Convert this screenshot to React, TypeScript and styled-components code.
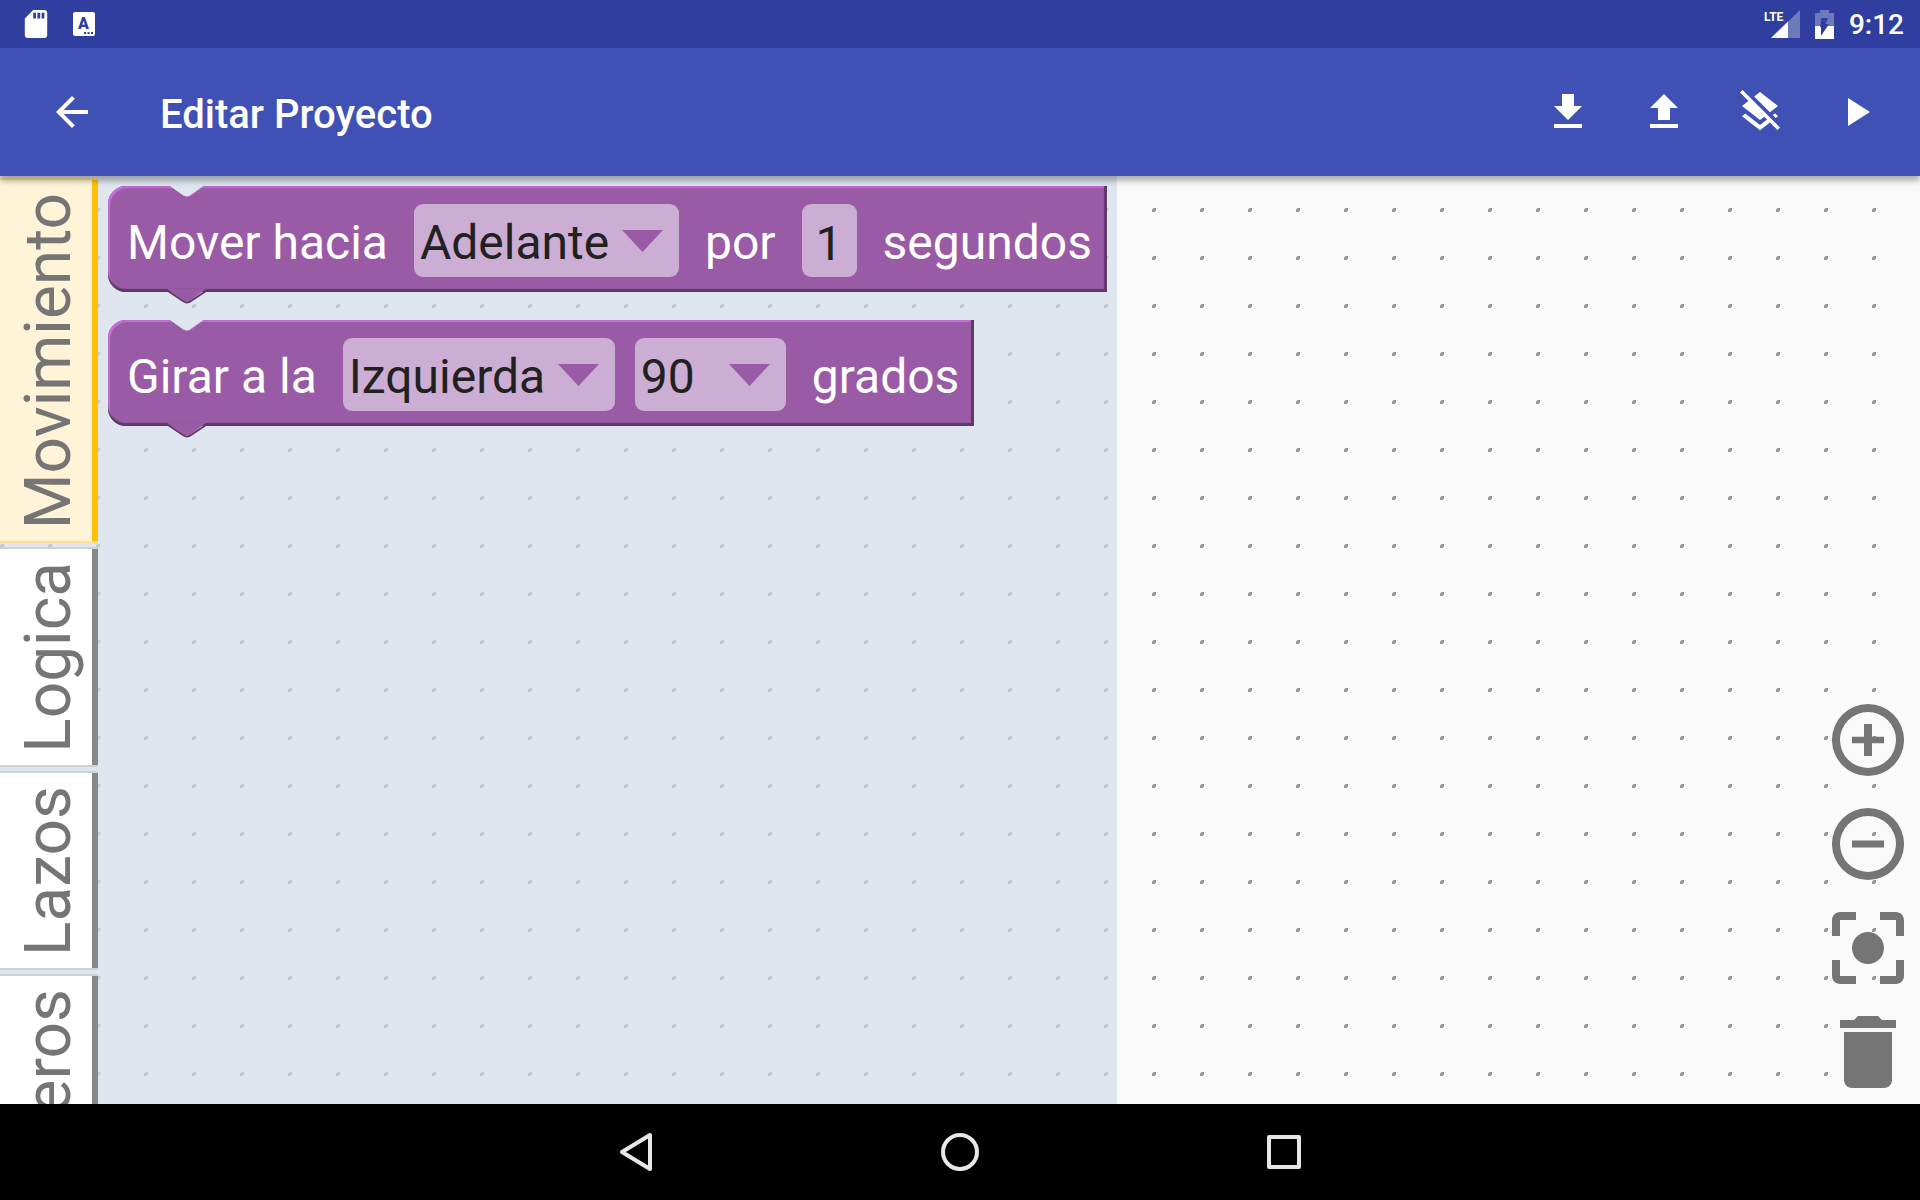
import React from "react";
import styled, { createGlobalStyle } from "styled-components";

const Global = createGlobalStyle`
  *, *::before, *::after { box-sizing: border-box; }
  body { margin: 0; background: #000; font-family: Roboto, "Noto Sans", sans-serif; }
  button { border: 0; padding: 0; background: none; color: inherit; font: inherit; cursor: pointer; }
`;

const Screen = styled.div`
  display: flex;
  flex-direction: column;
  height: 100vh;
  overflow: hidden;
`;

const StatusBar = styled.div`
  flex: none;
  height: 48px;
  padding: 0 16px 0 24px;
  display: flex;
  align-items: center;
  justify-content: space-between;
  background: #303f9f;
  color: #fff;
`;

const StatusGroup = styled.div<{ $gap: number }>`
  display: flex;
  align-items: center;
  gap: ${(p) => p.$gap}px;
`;

const Clock = styled.time`
  padding-top: 2px;
  font-size: 28px;
  line-height: 32px;
  font-weight: 500;
`;

const AppBar = styled.header`
  position: relative;
  z-index: 2;
  flex: none;
  height: 128px;
  padding: 0 16px 0 24px;
  display: flex;
  align-items: center;
  background: #3f51b5;
  color: #fff;
  box-shadow: 0 5px 6px rgba(0, 0, 0, 0.3);
`;

const IconButton = styled.button`
  width: 96px;
  height: 96px;
  display: grid;
  place-items: center;
`;

const Title = styled.h1`
  flex: 1;
  margin: 0;
  padding: 6px 0 0 40px;
  font-size: 40px;
  line-height: 48px;
  font-weight: 500;
`;

const Workspace = styled.main`
  position: relative;
  flex: 1;
  min-height: 0;
  display: flex;
  justify-content: space-between;
  background: #fafafa;
`;

const Grid = styled.svg`
  position: absolute;
  inset: 0;
  width: 100%;
  height: 100%;
`;

const Toolbox = styled.div`
  position: relative;
  display: flex;
  overflow: hidden;
  background: rgba(211, 221, 233, 0.7);
`;

const Tabs = styled.nav`
  display: flex;
  flex-direction: column;
  gap: 4px;
  padding-top: 2px;
`;

const Tab = styled.button<{ $active?: boolean }>`
  flex: none;
  width: 98px;
  padding: 13px 0 12px;
  display: flex;
  justify-content: center;
  border: solid ${(p) => (p.$active ? "#ffdf90" : "#d0d2d4")};
  border-width: 2px 0;
  background: ${(p) => (p.$active ? "#fff4d7" : "#fff")};
  box-shadow: inset -6px 0 ${(p) => (p.$active ? "#ffc107" : "#888")};
`;

const TabLabel = styled.span`
  writing-mode: vertical-rl;
  transform: rotate(180deg);
  font-size: 64px;
  line-height: 76px;
  color: #757575;
`;

const Flyout = styled.section`
  padding: 10px 10px 0;
  display: flex;
  flex-direction: column;
  align-items: flex-start;
  gap: 28px;
`;

const Block = styled.div`
  position: relative;
  height: 106px;
  padding: 18px 9px 10px 13px;
  display: flex;
  align-items: flex-start;
  gap: 20px;
  border-radius: 18px 0 0 18px;
  background: #995ba5;
  box-shadow: inset -3px 0 1px #5f3a68, inset 0 -3px 1px #5f3a68, inset 2px 2px 1px #c76fdc;
`;

const Notch = styled.svg`
  position: absolute;
  left: 60px;
  top: 0;
`;

const Plug = styled.svg`
  position: absolute;
  left: 58px;
  bottom: -12px;
`;

const Label = styled.span`
  padding: 0 6px;
  font-size: 48px;
  line-height: 78px;
  color: #fff;
  white-space: nowrap;
`;

const Field = styled.span`
  position: relative;
  display: flex;
  height: 73px;
  border-radius: 9px;
  background: #ccadd3;
`;

const Drop = styled.select`
  appearance: none;
  min-width: 151px;
  height: 73px;
  margin: 0;
  padding: 5px 69px 0 6px;
  border: 0;
  border-radius: 9px;
  background: none;
  font: 48px/68px Roboto, "Noto Sans", sans-serif;
  color: #212121;
`;

const Caret = styled.svg`
  position: absolute;
  right: 16px;
  top: 26px;
  pointer-events: none;
`;

const NumberBox = styled.input`
  width: 55px;
  height: 73px;
  padding: 5px 0 0;
  border: 0;
  background: none;
  text-align: center;
  font: 48px/68px Roboto, "Noto Sans", sans-serif;
  color: #212121;
`;

const Controls = styled.div`
  position: relative;
  align-self: flex-end;
  padding: 16px;
  display: flex;
  flex-direction: column;
  gap: 32px;
`;

const ControlButton = styled.button`
  width: 72px;
  height: 72px;
  display: block;
  color: #757575;
`;

const NavBar = styled.footer`
  flex: none;
  height: 96px;
  display: flex;
  justify-content: center;
  gap: 228px;
  background: #000;
  color: #e8e8e8;
`;

const ActionIcon = ({ d }: { d: string }) => (
  <svg width="48" height="48" viewBox="0 0 24 24" fill="currentColor" aria-hidden>
    <path d={d} />
  </svg>
);

const ControlIcon = ({ d }: { d: string }) => (
  <svg width="72" height="72" viewBox="3 3 18 18" fill="currentColor" aria-hidden>
    <path fillRule="evenodd" d={d} />
  </svg>
);

const NavIcon = ({ children }: { children: React.ReactNode }) => (
  <svg width="48" height="48" fill="none" stroke="currentColor" strokeWidth="4" strokeLinejoin="round" aria-hidden>
    {children}
  </svg>
);

const actions = [
  { label: "Descargar", d: "M19 9h-4V3H9v6H5l7 7 7-7zM5 18v2h14v-2H5z" },
  { label: "Subir", d: "M9 16h6v-6h4l-7-7-7 7h4zm-4 2h14v2H5z" },
  {
    label: "Limpiar",
    d: "M19.81 14.99l1.19-.92-1.43-1.43-1.19.92 1.43 1.43zm-.45-4.72L21 9l-9-7-2.91 2.27 7.87 7.88 2.4-1.88zM3.27 1L2 2.27l4.22 4.22L3 9l1.63 1.27L12 16l2.1-1.63 1.43 1.43L12 18.54l-7.37-5.73L3 14.07l9 7 4.95-3.85L20.73 21 22 19.73 3.27 1z",
  },
  { label: "Ejecutar", d: "M8 5v14l11-7z" },
];

const RING = "M12 3a9 9 0 1 0 0 18a9 9 0 1 0 0-18zM12 5a7 7 0 1 1 0 14a7 7 0 1 1 0-14z";

const controls = [
  { label: "Acercar", d: RING + "M11 8h2v3.2h3v1.6h-3V16h-2v-3.2H8v-1.6h3z" },
  { label: "Alejar", d: RING + "M8 11.1h8v1.8H8z" },
  {
    label: "Centrar",
    d: "M12 8c-2.21 0-4 1.79-4 4s1.79 4 4 4 4-1.79 4-4-1.79-4-4-4zm-7 7H3v4c0 1.1.9 2 2 2h4v-2H5v-4zM5 5h4V3H5c-1.1 0-2 .9-2 2v4h2V5zm14-2h-4v2h4v4h2V5c0-1.1-.9-2-2-2zm0 16h-4v2h4c1.1 0 2-.9 2-2v-4h-2v4z",
  },
  { label: "Eliminar", d: "M6 19c0 1.1.9 2 2 2h8c1.1 0 2-.9 2-2V7H6v12zM19 4h-3.5l-1-1h-5l-1 1H5v2h14V4z" },
];

const categories = ["Movimiento", "Logica", "Lazos", "Numeros"];

function BlockShape({ children }: { children: React.ReactNode }) {
  return (
    <Block>
      <Notch width="38" height="14" aria-hidden>
        <path d="M2 0L16 10Q19 12 22 10L36 0z" fill="#dfe6ee" />
        <path d="M16 10Q19 12 22 10L36 0" fill="none" stroke="#bd6bcf" strokeWidth="1" />
      </Notch>
      <Plug width="42" height="15" aria-hidden>
        <path d="M2 0H40L25 11Q21 14 17 11L2 1z" fill="#995ba5" />
        <path d="M2 2L17 12Q21 15 25 12L40 2" fill="none" stroke="#5f3a68" strokeWidth="2" />
      </Plug>
      {children}
    </Block>
  );
}

function Dropdown({ label, options, value }: { label: string; options: string[]; value: string }) {
  return (
    <Field>
      <Drop aria-label={label} defaultValue={value}>
        {options.map((o) => (
          <option key={o}>{o}</option>
        ))}
      </Drop>
      <Caret width="41" height="22" aria-hidden>
        <path d="M0 0H41L20.5 22z" fill="#995ba5" />
      </Caret>
    </Field>
  );
}

export default function App() {
  return (
    <Screen>
      <Global />
      <StatusBar>
        <StatusGroup $gap={25}>
          <svg width="24" height="28" viewBox="3.5 2 17 20" fill="#fff" aria-hidden>
            <path d="M18 2h-8L4 8v12c0 1.1.9 2 2 2h12c1.1 0 2-.9 2-2V4c0-1.1-.9-2-2-2zm-6 6h-2V4h2v4zm3 0h-2V4h2v4zm3 0h-2V4h2v4z" />
          </svg>
          <svg width="22" height="24" aria-hidden>
            <rect width="22" height="24" rx="2" fill="#fff" />
            <text x="10.5" y="17" textAnchor="middle" fontFamily="Roboto" fontWeight="900" fontSize="16" fill="#303f9f">A</text>
            <path d="M11 20h2v2h-2zM14.500 20h2v2h-2zM18 20h2v2h-2z" fill="#303f9f" />
          </svg>
        </StatusGroup>
        <StatusGroup $gap={15}>
          <svg width="36" height="30" aria-hidden>
            <text x="0" y="12" fontFamily="Roboto" fontWeight="700" fontSize="12" fill="#fff">LTE</text>
            <path d="M36 1V29H7z" fill="#fff" fillOpacity=".3" />
            <path d="M24 12.500V29H7z" fill="#fff" />
          </svg>
          <svg width="19" height="29" aria-hidden>
            <path d="M0 3h5V0h9v3h5v13H0z" fill="#fff" fillOpacity=".3" />
            <path d="M0 16h19v13H0z" fill="#fff" />
            <path d="M6.500 8H13L10.500 14H14L6 26V17H5z" fill="#303f9f" />
          </svg>
          <Clock>9:12</Clock>
        </StatusGroup>
      </StatusBar>
      <AppBar>
        <IconButton aria-label="Volver">
          <ActionIcon d="M20 11H7.830l5.590-5.590L12 4l-8 8 8 8 1.410-1.410L7.830 13H20v-2z" />
        </IconButton>
        <Title>Editar Proyecto</Title>
        {actions.map((a) => (
          <IconButton key={a.label} aria-label={a.label}>
            <ActionIcon d={a.d} />
          </IconButton>
        ))}
      </AppBar>
      <Workspace>
        <Grid aria-hidden>
          <defs>
            <pattern id="dots" width="48" height="48" patternUnits="userSpaceOnUse">
              <path d="M1 32h3v3H3v1H0v-3h1z" fill="#999" />
            </pattern>
          </defs>
          <rect width="100%" height="100%" fill="url(#dots)" />
        </Grid>
        <Toolbox>
          <Tabs aria-label="Categorías">
            {categories.map((c, i) => (
              <Tab key={c} $active={i === 0}>
                <TabLabel>{c}</TabLabel>
              </Tab>
            ))}
          </Tabs>
          <Flyout>
            <BlockShape>
              <Label>Mover hacia</Label>
              <Dropdown label="Dirección" options={["Adelante", "Atras"]} value="Adelante" />
              <Label>por</Label>
              <Field>
                <NumberBox aria-label="Segundos" defaultValue="1" />
              </Field>
              <Label>segundos</Label>
            </BlockShape>
            <BlockShape>
              <Label>Girar a la</Label>
              <Dropdown label="Giro" options={["Izquierda", "Derecha"]} value="Izquierda" />
              <Dropdown label="Ángulo" options={["45", "90"]} value="90" />
              <Label>grados</Label>
            </BlockShape>
          </Flyout>
        </Toolbox>
        <Controls>
          {controls.map((c) => (
            <ControlButton key={c.label} aria-label={c.label}>
              <ControlIcon d={c.d} />
            </ControlButton>
          ))}
        </Controls>
      </Workspace>
      <NavBar>
        <IconButton aria-label="Atrás">
          <NavIcon>
            <path d="M38 7V41L10 24z" />
          </NavIcon>
        </IconButton>
        <IconButton aria-label="Inicio">
          <NavIcon>
            <circle cx="24" cy="24" r="17" />
          </NavIcon>
        </IconButton>
        <IconButton aria-label="Recientes">
          <NavIcon>
            <rect x="9" y="9" width="30" height="30" />
          </NavIcon>
        </IconButton>
      </NavBar>
    </Screen>
  );
}
